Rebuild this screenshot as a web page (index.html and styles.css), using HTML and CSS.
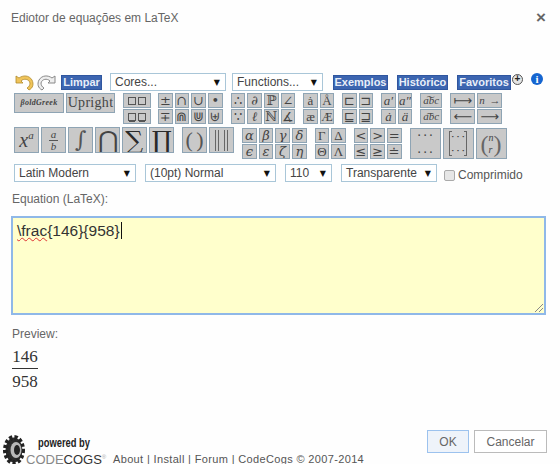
FILE: index.html
```html
<!DOCTYPE html>
<html lang="pt">
<head>
  <meta charset="UTF-8" />
  <title>Ediotor de equações em LaTeX</title>
  <link rel="stylesheet" href="styles.css">
</head>
<body>
  <div class="dialogo">
    <div class="topo">
      <span class="titulo">Ediotor de equações em LaTeX</span>
      <span class="fechar">×</span>
    </div>

    <div class="linha-comandos">
      <svg class="seta" width="20" height="17" viewBox="0 0 20 17">
        <path d="M2 2v7h7L7 7c3-3 8-2 9 2 0 2-1 4-3 5l2 2c4-2 5-6 3-10C15 1 9 1 5 4z" fill="#f0c45a" stroke="#b08a2c" stroke-width="0.8"/>
      </svg>
      <svg class="seta" width="20" height="17" viewBox="0 0 20 17">
        <path d="M18 2v7h-7l2-2c-3-3-8-2-9 2 0 2 1 4 3 5l-2 2C1 14 0 10 2 6 5 1 11 1 15 4z" fill="#eee" stroke="#888" stroke-width="1"/>
      </svg>
      <button class="botao-azul limpar">Limpar</button>
      <div class="sel cores">Cores...<span class="seta-sel">▼</span></div>
      <div class="sel funcoes">Functions...<span class="seta-sel">▼</span></div>
      <button class="botao-azul exemplos">Exemplos</button>
      <button class="botao-azul historico">Histórico</button>
      <button class="botao-azul favoritos">Favoritos</button>
      <span class="mais">+</span>
      <span class="info">i</span>
    </div>

    <div class="linha-simbolos">
      <div class="fonte-btns">
        <span class="celula fonte bold-green">βoldGreek</span>
        <span class="celula fonte upright">Upright</span>
      </div>
      <div class="grupo g-caixas">
        <span class="celula"><i class="cx"></i><i class="cx"></i></span>
        <span class="celula"><i class="cx sub"></i><i class="cx sub"></i></span>
      </div>
      <div class="grupo g4">
        <span class="celula">±</span><span class="celula">∩</span><span class="celula">∪</span><span class="celula">•</span>
        <span class="celula">∓</span><span class="celula">⋒</span><span class="celula">⋓</span><span class="celula">⊎</span>
      </div>
      <div class="grupo g4">
        <span class="celula">∴</span><span class="celula it">∂</span><span class="celula">ℙ</span><span class="celula">∠</span>
        <span class="celula">∵</span><span class="celula it">ℓ</span><span class="celula">ℕ</span><span class="celula">∡</span>
      </div>
      <div class="grupo g2">
        <span class="celula">ȧ</span><span class="celula">Å</span>
        <span class="celula">æ</span><span class="celula">Æ</span>
      </div>
      <div class="grupo g2 g-sub">
        <span class="celula">⊏</span><span class="celula">⊐</span>
        <span class="celula">⊑</span><span class="celula">⊒</span>
      </div>
      <div class="grupo g2 g-acento">
        <span class="celula it">a′</span><span class="celula it">a″</span>
        <span class="celula it">ȧ</span><span class="celula it">ä</span>
      </div>
      <div class="grupo g1">
        <span class="celula it">a͠bc</span>
        <span class="celula it">a͡bc</span>
      </div>
      <div class="grupo g-setas">
        <span class="celula">⟼</span><span class="celula it seta-n">n →</span>
        <span class="celula">⟵</span><span class="celula">⟶</span>
      </div>
    </div>

    <div class="linha-grandes">
      <div class="bloco">
        <span class="grande expoente"><em>x</em><sup>a</sup></span>
        <span class="grande fracao-ico"><i>a</i><i>b</i></span>
        <span class="grande simbolo integral">∫</span>
        <span class="grande simbolo"><span class="glifo">⋂</span></span>
        <span class="grande simbolo forte"><span class="glifo">∑</span></span>
        <span class="grande simbolo forte"><span class="glifo">∏</span></span>
      </div>
      <div class="bloco">
        <span class="grande parenteses">( )</span>
        <span class="grande barras"><i></i><i></i></span>
      </div>
      <div class="grupo g4 gr">
        <span class="celula it">α</span><span class="celula it">β</span><span class="celula it">γ</span><span class="celula it">δ</span>
        <span class="celula it">ϵ</span><span class="celula it">ε</span><span class="celula it">ζ</span><span class="celula it">η</span>
      </div>
      <div class="grupo g2 gr">
        <span class="celula">Γ</span><span class="celula">Δ</span>
        <span class="celula">Θ</span><span class="celula">Λ</span>
      </div>
      <div class="grupo g3 gr">
        <span class="celula">&lt;</span><span class="celula">&gt;</span><span class="celula">=</span>
        <span class="celula">≤</span><span class="celula">≥</span><span class="celula">≐</span>
      </div>
      <div class="bloco matrizes">
        <span class="matriz pontos"><i>· · ·</i><i>· · ·</i></span>
        <span class="matriz"><span class="colchete"><i>· · ·</i><i>· · ·</i></span></span>
        <span class="matriz binomial"><b>(</b><em>n<br>r</em><b>)</b></span>
      </div>
    </div>

    <div class="linha-opcoes">
      <div class="sel latin">Latin Modern<span class="seta-sel">▼</span></div>
      <div class="sel tamanho">(10pt) Normal<span class="seta-sel">▼</span></div>
      <div class="sel dpi">110<span class="seta-sel">▼</span></div>
      <div class="sel fundo">Transparente<span class="seta-sel">▼</span></div>
      <label class="comprimido"><i class="caixa"></i>Comprimido</label>
    </div>

    <p class="rotulo rotulo-eq">Equation (LaTeX):</p>
    <div class="editor"><span class="erro">\frac</span>{146}{958}<span class="cursor"></span>
      <svg class="resize" width="10" height="10" viewBox="0 0 10 10">
        <path d="M1 9l8-8M5 9l4-4" stroke="#888" fill="none"/>
      </svg>
    </div>

    <p class="rotulo rotulo-prev">Preview:</p>
    <div class="preview">
      <span>146</span>
      <span class="denominador">958</span>
    </div>

    <div class="rodape">
      <svg class="engrenagem" width="24" height="34" viewBox="0 0 24 34">
        <ellipse cx="12" cy="16" rx="8.5" ry="12.5" fill="#2c2c2c" stroke="#222" stroke-width="5" stroke-dasharray="3 2"/>
        <ellipse cx="14" cy="16" rx="5.5" ry="8" fill="#b8b8b8"/>
        <ellipse cx="15" cy="16" rx="3" ry="5" fill="#222"/>
      </svg>
      <div class="logo">
        <span class="powered">powered by</span>
        <span class="marca">CODE<b>COGS</b><sup>®</sup></span>
      </div>
      <div class="links">About | Install | Forum | CodeCogs © 2007-2014</div>
      <button class="acao ok">OK</button>
      <button class="acao cancelar">Cancelar</button>
    </div>
  </div>
</body>
</html>
```
FILE: styles.css
```css
* {
  box-sizing: border-box;
}

html, body {
  margin: 0;
  height: 464px;
  overflow: hidden;
}

body {
  background: #fefefe;
  font-family: "Liberation Sans", Arial, sans-serif;
  color: #555;
}

.dialogo {
  width: 560px;
  height: 464px;
  overflow: hidden;
}

.topo {
  display: flex;
  justify-content: space-between;
  align-items: center;
  height: 17px;
  margin-top: 9px;
  padding: 0 14px 0 11px;
}

.titulo {
  font-size: 12px;
  color: #666;
}

.fechar {
  font-size: 17px;
  font-weight: bold;
  color: #666;
}

/* barra de comandos */
.linha-comandos {
  display: flex;
  align-items: center;
  height: 18px;
  margin: 47px 0 0 14px;
}

.seta {
  margin-right: 3px;
}

.botao-azul {
  height: 15px;
  padding: 0;
  border: 1px solid #2f569f;
  background: #3c65b0;
  color: #e8eef8;
  font-family: "Liberation Sans", Arial, sans-serif;
  font-size: 11px;
  font-weight: bold;
  text-align: center;
}

.limpar { width: 41px; margin-left: 1px; }
.exemplos { width: 55px; margin-left: 10px; }
.historico { width: 51px; margin-left: 9px; }
.favoritos { width: 54px; margin-left: 9px; }

.sel {
  display: flex;
  justify-content: space-between;
  align-items: center;
  height: 18px;
  padding: 0 5px 0 4px;
  border: 1px solid #a9c6d8;
  background: #fff;
  font-size: 12px;
  color: #444;
  white-space: nowrap;
}

.seta-sel {
  font-family: "DejaVu Sans", sans-serif;
  font-size: 8px;
  color: #111;
}

.cores { width: 116px; margin-left: 8px; }
.funcoes { width: 91px; margin-left: 6px; }

.mais {
  width: 11px;
  height: 11px;
  margin: 0 0 6px 1px;
  border: 1px solid #555;
  border-radius: 50%;
  background: #e4e4e4;
  font-size: 10px;
  font-weight: bold;
  line-height: 8px;
  text-align: center;
  color: #222;
}

.info {
  width: 12px;
  height: 12px;
  margin: 0 0 6px 8px;
  border-radius: 50%;
  background: #1565d0;
  color: #fff;
  font-family: "Liberation Serif", serif;
  font-size: 11px;
  font-weight: bold;
  line-height: 12px;
  text-align: center;
}

/* simbolos */
.celula,
.grande,
.matriz {
  display: flex;
  justify-content: center;
  align-items: center;
  border: 1px solid #8ea4b4;
  background: #c9c9c9;
  color: #444;
  font-family: "Liberation Serif", "DejaVu Serif", serif;
  overflow: hidden;
}

.celula {
  height: 15px;
  font-size: 13px;
  line-height: 13px;
}

.it {
  font-style: italic;
}

.linha-simbolos {
  display: flex;
  align-items: flex-start;
  height: 31px;
  margin: 2px 0 0 14px;
}

.fonte-btns {
  display: flex;
  gap: 2px;
  margin-right: 8px;
}

.fonte {
  height: 20px;
  width: 50px;
  line-height: 18px;
}

.bold-green {
  font-size: 8px;
  font-style: italic;
  font-weight: bold;
  letter-spacing: 0.3px;
}

.upright {
  width: 49px;
  font-size: 14px;
  letter-spacing: 0.3px;
}

.grupo {
  display: grid;
  gap: 1px 2px;
  margin-right: 8px;
}

.g-caixas {
  grid-template-columns: 28px;
  margin-right: 7px;
}

.g-caixas .celula {
  gap: 2px;
}

.cx {
  width: 8px;
  height: 8px;
  border: 1px solid #555;
}

.cx.sub {
  box-shadow: 0 2px 0 -1px #555;
}

.g4 { grid-template-columns: repeat(4, 14.67px); }
.g3 { grid-template-columns: repeat(3, 14.67px); }
.g2 { grid-template-columns: repeat(2, 14.5px); }
.g1 { grid-template-columns: 22px; }
.g-setas { grid-template-columns: repeat(2, 25px); margin-right: 0; }

.g-sub .celula { font-family: "DejaVu Sans", sans-serif; font-size: 13px; }
.g-acento .celula { font-size: 13px; }
.g1 .celula { font-size: 11px; }
.g-setas .celula { font-family: "DejaVu Sans", sans-serif; font-size: 13px; }
.g-setas .seta-n { font-family: "Liberation Serif", serif; font-size: 11px; word-spacing: 2px; }
.g4 .celula { font-family: "DejaVu Serif", serif; font-size: 13px; }
.g3 .celula { font-family: "DejaVu Sans", sans-serif; font-size: 13px; }

.linha-grandes {
  display: flex;
  align-items: flex-start;
  margin: 3px 0 0 14px;
}

.bloco {
  display: flex;
  gap: 2px;
  margin-right: 8px;
}

.grande {
  width: 25px;
  height: 26px;
  font-size: 18px;
  line-height: 24px;
}

.expoente {
  font-size: 20px;
}

.expoente sup {
  font-size: 11px;
  font-style: italic;
  line-height: 0;
  position: relative;
  top: -5px;
}

.fracao-ico {
  flex-direction: column;
  font-size: 11px;
  font-style: italic;
  line-height: 11px;
}

.fracao-ico i:first-child {
  border-bottom: 1px solid #555;
  padding: 0 2px;
}

.simbolo {
  font-family: "DejaVu Serif", serif;
  font-size: 20px;
}

.glifo {
  display: block;
  transform: scale(1.25);
}

.integral {
  font-size: 22px;
  color: #555;
}

.forte {
  color: #2a2a2a;
}

.parenteses {
  font-size: 22px;
  white-space: nowrap;
  word-spacing: -2px;
  color: #555;
}

.barras {
  gap: 5px;
}

.barras i {
  width: 4px;
  height: 21px;
  border-left: 1px solid #666;
  border-right: 1px solid #666;
}

.gr {
  margin-top: 1px;
}

.matrizes {
  margin: 1px 0 0 0;
}

.matriz {
  width: 31px;
  height: 31px;
  flex-direction: column;
  gap: 8px;
  font-size: 10px;
  font-weight: bold;
  line-height: 9px;
}

.matriz i {
  font-style: normal;
}

/* corchete: so os cantos */
.colchete {
  display: flex;
  flex-direction: column;
  justify-content: center;
  gap: 5px;
  height: 25px;
  padding: 0 2px;
  font-size: 9px;
  background:
    linear-gradient(#666, #666) left top / 1px 100% no-repeat,
    linear-gradient(#666, #666) right top / 1px 100% no-repeat,
    linear-gradient(#666, #666) left top / 3px 1px no-repeat,
    linear-gradient(#666, #666) left bottom / 3px 1px no-repeat,
    linear-gradient(#666, #666) right top / 3px 1px no-repeat,
    linear-gradient(#666, #666) right bottom / 3px 1px no-repeat;
}

.binomial {
  flex-direction: row;
  gap: 0;
  font-size: 10px;
  font-weight: normal;
}

.binomial b {
  font-size: 24px;
  font-weight: normal;
  line-height: 24px;
  color: #666;
}

.binomial em {
  line-height: 12px;
}

/* opcoes */
.linha-opcoes {
  display: flex;
  align-items: center;
  height: 18px;
  margin: 5px 0 0 14px;
}

.latin { width: 122px; }
.tamanho { width: 131px; margin-left: 9px; }
.dpi { width: 47px; margin-left: 9px; }
.fundo { width: 96px; margin-left: 9px; }

.comprimido {
  display: flex;
  align-items: center;
  gap: 3px;
  margin: 4px 0 0 7px;
  font-size: 12px;
}

.caixa {
  width: 11px;
  height: 11px;
  border: 1px solid #aaa;
  border-radius: 2px;
  background: #e6e6e6;
}

.rotulo {
  margin: 0;
  font-size: 12px;
  line-height: 14px;
  color: #666;
}

.rotulo-eq {
  margin: 10px 0 0 12px;
}

.editor {
  position: relative;
  width: 535px;
  height: 99px;
  margin: 10px 0 0 11px;
  padding: 4px;
  border: 2px solid #8fb8e8;
  background: #ffffcc;
  font-size: 15.5px;
  line-height: 18px;
  color: #333;
}

.erro {
  text-decoration: underline wavy #d33;
  text-decoration-thickness: 1px;
}

.cursor {
  display: inline-block;
  width: 1px;
  height: 17px;
  margin-left: 1px;
  background: #111;
  vertical-align: top;
}

.resize {
  position: absolute;
  right: 0;
  bottom: 0;
}

.rotulo-prev {
  margin: 12px 0 0 12px;
}

.preview {
  display: flex;
  flex-direction: column;
  align-items: center;
  width: 26px;
  margin: 7px 0 0 12px;
  font-family: "Liberation Serif", serif;
  font-size: 17px;
  line-height: 18px;
  color: #333;
}

.denominador {
  margin-top: 2px;
  padding-top: 4px;
  border-top: 1px solid #333;
}

/* rodape */
.rodape {
  display: flex;
  align-items: flex-start;
  margin: 39px 0 0 2px;
}

.engrenagem {
  margin-top: 4px;
}

.logo {
  display: flex;
  flex-direction: column;
  width: 87px;
  margin-top: 7px;
}

.powered {
  margin-left: 12px;
  font-size: 13px;
  font-weight: bold;
  line-height: 12px;
  color: #222;
  white-space: nowrap;
  transform: scaleX(0.72);
  transform-origin: left;
}

.marca {
  margin-top: 4px;
  font-size: 13px;
  line-height: 14px;
  color: #888;
  white-space: nowrap;
}

.marca b {
  font-weight: normal;
  color: #333;
}

.marca sup {
  font-size: 6px;
  line-height: 0;
  color: #aaa;
}

.links {
  width: 314px;
  margin-top: 23px;
  font-size: 11px;
  line-height: 13px;
  letter-spacing: 0.35px;
  color: #555;
}

.acao {
  height: 23px;
  padding: 0;
  font-family: "Liberation Sans", Arial, sans-serif;
  font-size: 12px;
  color: #666;
  background: #fff;
  border: 1px solid #bbb;
}

.ok {
  width: 42px;
  border-color: #9cc2ee;
  background: #eef3fa;
}

.cancelar {
  width: 73px;
  margin-left: 5px;
}
```
